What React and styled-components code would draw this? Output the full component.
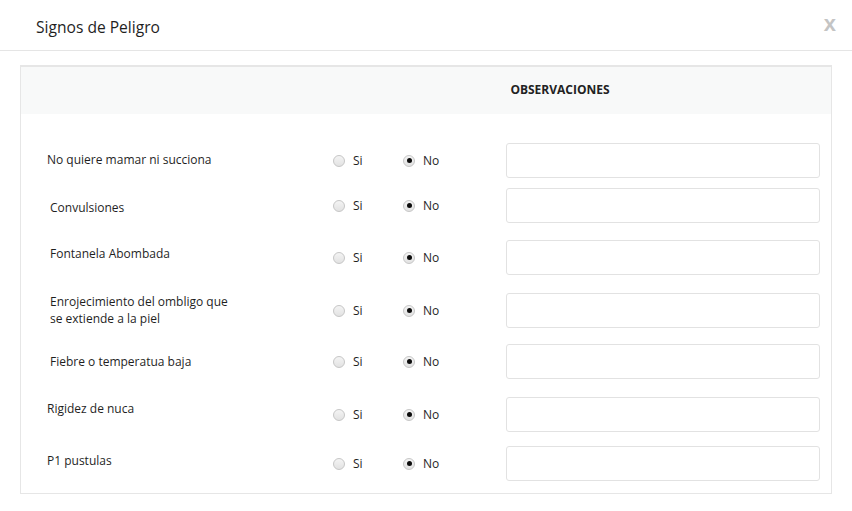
import React from 'react';
import styled, { createGlobalStyle } from 'styled-components';

const GlobalStyle = createGlobalStyle`
  html, body {
    margin: 0;
    padding: 0;
    background: #ffffff;
  }
  body {
    font-family: 'Open Sans', 'Noto Sans', sans-serif;
    color: #222222;
  }
`;

const Modal = styled.div`
  width: 852px;
  height: 511px;
  background: #ffffff;
`;

const ModalHeader = styled.div`
  height: 50px;
  border-bottom: 1px solid #e5e5e5;
  display: flex;
  align-items: center;
  justify-content: space-between;
  padding: 0 16px 0 36px;
`;

const Title = styled.h4`
  margin: 0;
  font-size: 15.6px;
  font-weight: 400;
  color: #1f1f1f;
  padding-top: 3px;
`;

const Close = styled.span`
  font-family: 'Liberation Sans', Arial, sans-serif;
  font-size: 22px;
  font-weight: 700;
  color: #c4c4c4;
  margin-bottom: 2px;
`;

const Panel = styled.div`
  margin: 14px 20px 0 20px;
  border: 1px solid #e6e6e6;
  border-top-width: 2px;
`;

const PanelHead = styled.div`
  height: 47px;
  background: #f8f9f9;
  display: grid;
  grid-template-columns: 416px 194px;
  padding-left: 26px;
  align-items: center;
`;

const HeadCell = styled.div`
  font-size: 12px;
  font-weight: 700;
  color: #222222;
  text-align: center;
  padding-bottom: 2px;
`;

const PanelBody = styled.div`
  padding: 29px 11px 12px 26px;
`;

const Row = styled.div`
  display: grid;
  grid-template-columns: 286px 70px 103px 314px;
  align-items: center;
  margin-top: ${p => p.$space}px;
`;

const Label = styled.div`
  font-size: 12px;
  line-height: 17px;
  color: #1f1f1f;
  padding-left: ${p => (p.$indent ? 3 : 0)}px;
  transform: translateY(${p => p.$shift}px);
`;

const Option = styled.label`
  display: flex;
  align-items: center;
  gap: 8px;
  font-size: 12px;
  color: #1f1f1f;
`;

const Radio = styled.span`
  width: 12px;
  height: 12px;
  box-sizing: border-box;
  border-radius: 50%;
  border: 1px solid #c6c6c6;
  background: linear-gradient(#f4f4f4, #e2e2e2);
  display: flex;
  align-items: center;
  justify-content: center;

  &::after {
    content: '';
    width: 5px;
    height: 5px;
    border-radius: 50%;
    background: ${p => (p.$checked ? '#0d0d0d' : 'transparent')};
  }
`;

const Field = styled.input`
  width: 314px;
  height: 35px;
  box-sizing: border-box;
  border: 1px solid #e2e2e2;
  border-radius: 3px;
  background: #ffffff;
  outline: none;
`;

const signos = [
  { label: 'No quiere mamar ni succiona', space: 0, shift: -1 },
  { label: 'Convulsiones', indent: true, space: 10, shift: 2 },
  { label: 'Fontanela Abombada', indent: true, space: 17, shift: -4 },
  { label: ['Enrojecimiento del ombligo que', 'se extiende a la piel'], indent: true, space: 18, shift: -1 },
  { label: 'Fiebre o temperatua baja', indent: true, space: 16, shift: 0 },
  { label: 'Rigidez de nuca', space: 18, shift: -6 },
  { label: 'P1 pustulas', space: 14, shift: -3 },
];

export default function App() {
  return (
    <Modal>
      <GlobalStyle />
      <ModalHeader>
        <Title>Signos de Peligro</Title>
        <Close>x</Close>
      </ModalHeader>
      <Panel>
        <PanelHead>
          <span />
          <HeadCell>OBSERVACIONES</HeadCell>
        </PanelHead>
        <PanelBody>
          {signos.map((s, i) => (
            <Row key={i} $space={s.space}>
              <Label $indent={s.indent} $shift={s.shift}>
                {Array.isArray(s.label)
                  ? s.label.map((l, j) => <div key={j}>{l}</div>)
                  : s.label}
              </Label>
              <Option>
                <Radio />
                Si
              </Option>
              <Option>
                <Radio $checked />
                No
              </Option>
              <Field type="text" />
            </Row>
          ))}
        </PanelBody>
      </Panel>
    </Modal>
  );
}
